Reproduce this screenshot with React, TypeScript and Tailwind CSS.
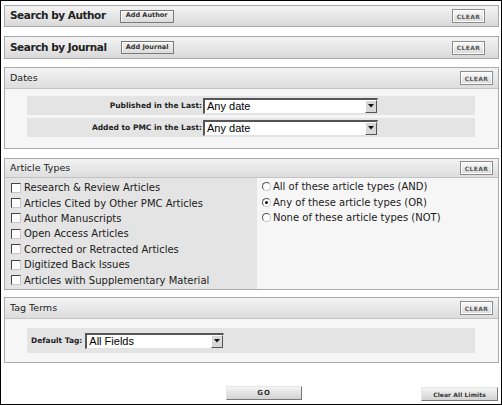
import React from "react";

const SANS = { fontFamily: '"DejaVu Sans", Verdana, sans-serif' };
const ARIAL = { fontFamily: '"Liberation Sans", Arial, sans-serif' };

function ClearBtn({ className = "" }: { className?: string }) {
  return (
    <div
      className={`w-[33px] h-[14px] shrink-0 border border-[#8c8c8c] shadow-[inset_1px_1px_0_#fff,inset_-1px_-1px_0_#fff] bg-linear-to-b from-[#fbfbfb] to-[#d9d9d9] flex items-center justify-center text-[6px] font-bold tracking-[0.4px] text-[#555] ${className}`}
    >
      CLEAR
    </div>
  );
}

function TopBar({
  title,
  button,
  btnWidth,
  height,
}: {
  title: string;
  button: string;
  btnWidth: string;
  height: string;
}) {
  return (
    <div
      className={`${height} border border-[#a8a8a8] bg-linear-to-b from-[#f4f4f4] to-[#d9d9d9] flex items-center pl-[5px] pr-[13px]`}
    >
      <span className="text-[10.5px] font-bold tracking-[-0.45px] text-[#222]">{title}</span>
      <div
        className={`${btnWidth} ml-[14px] h-[13px] border border-[#7a7a7a] shadow-[inset_1px_1px_0_#fff] bg-linear-to-b from-[#f2f2f2] to-[#dcdcdc] flex items-center justify-center text-[6.5px] font-bold text-[#333]`}
      >
        {button}
      </div>
      <ClearBtn className="ml-auto" />
    </div>
  );
}

function Section({
  title,
  headerH,
  className = "",
  children,
}: {
  title: string;
  headerH: string;
  className?: string;
  children: React.ReactNode;
}) {
  return (
    <div className={`border border-[#aaaaaa] bg-[#f6f6f6] ${className}`}>
      <div
        className={`${headerH} border-b border-[#c2c2c2] bg-linear-to-b from-[#f3f3f3] to-[#dddddd] flex items-center pl-[5px] pr-[5px]`}
      >
        <span className="text-[9.5px] text-[#222] pt-[1px]">{title}</span>
        <ClearBtn className="ml-auto" />
      </div>
      {children}
    </div>
  );
}

function Select({ value, width }: { value: string; width: string }) {
  return (
    <div
      className={`${width} h-[16px] shrink-0 flex bg-white border-t-2 border-l-2 border-b border-r border-t-[#555] border-l-[#555] border-b-[#e2e2e2] border-r-[#e2e2e2]`}
    >
      <span className="flex-1 pl-[2px] text-[11px] leading-[13px] text-black" style={ARIAL}>
        {value}
      </span>
      <div className="w-[12px] h-full bg-[#d8d8d8] border-t border-l border-b border-r border-t-white border-l-white border-b-[#555] border-r-[#555] flex items-center justify-center">
        <svg width="6" height="4" viewBox="0 0 6 4">
          <path d="M0 0h6L3 3.5z" fill="#111" />
        </svg>
      </div>
    </div>
  );
}

function Checkbox() {
  return (
    <div className="w-[10px] h-[10px] shrink-0 bg-white border border-t-[#444] border-l-[#444] border-b-[#c8c8c8] border-r-[#c8c8c8]" />
  );
}

function Radio({ checked }: { checked?: boolean }) {
  return (
    <div className="w-[9px] h-[9px] shrink-0 rounded-full bg-white border border-t-[#555] border-l-[#555] border-b-[#c8c8c8] border-r-[#c8c8c8] flex items-center justify-center">
      {checked && <div className="w-[3px] h-[3px] rounded-full bg-black" />}
    </div>
  );
}

const articleTypes = [
  "Research & Review Articles",
  "Articles Cited by Other PMC Articles",
  "Author Manuscripts",
  "Open Access Articles",
  "Corrected or Retracted Articles",
  "Digitized Back Issues",
  "Articles with Supplementary Material",
];

const radios = [
  { label: "All of these article types (AND)", checked: false },
  { label: "Any of these article types (OR)", checked: true },
  { label: "None of these article types (NOT)", checked: false },
];

export default function App() {
  return (
    <div
      className="w-[502px] h-[405px] border border-black bg-white pl-[3px] pr-[2px] pt-[4px] flex flex-col overflow-hidden"
      style={SANS}
    >
      <TopBar title="Search by Author" button="Add Author" btnWidth="w-[54px]" height="h-[22px]" />
      <div className="mt-[9px]">
        <TopBar title="Search by Journal" button="Add Journal" btnWidth="w-[53px]" height="h-[23px]" />
      </div>

      {/* Dates */}
      <Section title="Dates" headerH="h-[21px]" className="mt-[8px]">
        <div className="pt-[7px] pb-[11px] pl-[22px] pr-[23px] flex flex-col gap-[3px]">
          {["Published in the Last:", "Added to PMC in the Last:"].map((l) => (
            <div key={l} className="h-[19px] bg-[#e4e4e4] flex items-center">
              <span className="w-[176px] shrink-0 text-right pr-[1px] text-[7.5px] font-bold text-[#222]">{l}</span>
              <Select value="Any date" width="w-[175px]" />
            </div>
          ))}
        </div>
      </Section>

      {/* Article Types */}
      <Section title="Article Types" headerH="h-[19px]" className="mt-[9px]">
        <div className="h-[111px] flex">
          <div className="w-[252px] h-full bg-[#e4e4e4] pl-[6px] pt-[2px] flex flex-col">
            {articleTypes.map((t) => (
              <div key={t} className="h-[15.4px] flex items-center gap-[3px]">
                <Checkbox />
                <span className="text-[10px] text-[#1a1a1a] whitespace-nowrap">{t}</span>
              </div>
            ))}
          </div>
          <div className="flex-1 pl-[5px] pt-[1px] flex flex-col">
            {radios.map((r) => (
              <div key={r.label} className="h-[15.4px] flex items-center gap-[2px]">
                <Radio checked={r.checked} />
                <span className="text-[10px] text-[#1a1a1a] whitespace-nowrap">{r.label}</span>
              </div>
            ))}
          </div>
        </div>
      </Section>

      {/* Tag Terms */}
      <Section title="Tag Terms" headerH="h-[21px]" className="mt-[7px]">
        <div className="pt-[9px] pb-[9px] pl-[22px] pr-[23px]">
          <div className="h-[25px] bg-[#e4e4e4] flex items-center pl-[4px] gap-[3px]">
            <span className="text-[7.5px] font-bold text-[#222]">Default Tag:</span>
            <Select value="All Fields" width="w-[139px]" />
          </div>
        </div>
      </Section>

      {/* Bottom buttons */}
      <div className="mt-[23px] flex items-start pr-[1px]">
        <div className="ml-[222px] w-[76px] h-[14px] border border-t-[#e6e6e6] border-l-[#e6e6e6] border-b-[#777] border-r-[#777] bg-linear-to-b from-[#f4f4f4] to-[#d2d2d2] flex items-center justify-center text-[7px] font-bold tracking-[1px] text-[#333]">
          GO
        </div>
        <div className="ml-auto mt-[1px] w-[77px] h-[14px] border border-t-[#e6e6e6] border-l-[#e6e6e6] border-b-[#777] border-r-[#777] bg-linear-to-b from-[#f4f4f4] to-[#d2d2d2] flex items-center justify-center text-[6px] font-bold tracking-[0.1px] text-[#333]">
          Clear All Limits
        </div>
      </div>
    </div>
  );
}
